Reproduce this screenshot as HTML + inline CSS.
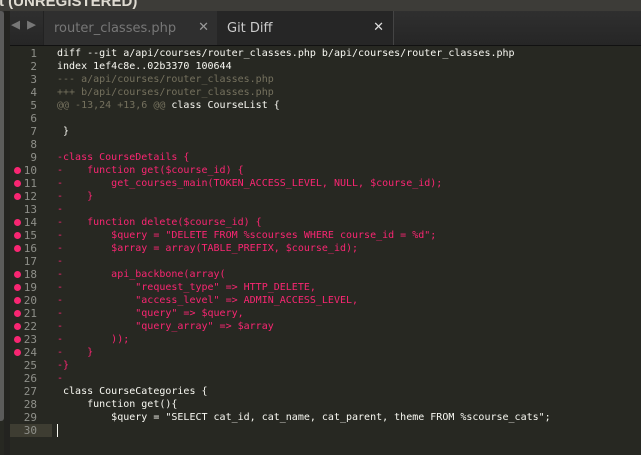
<!DOCTYPE html><html><head><style>
body{margin:0;width:641px;height:455px;overflow:hidden;background:#272822;position:relative;font-family:"DejaVu Sans Mono",monospace}
.t{position:absolute;left:0;top:0;width:641px;height:11px;background:#3d3c38;overflow:hidden}
.t span{position:absolute;left:-1px;top:-7px;font:bold 15px "Liberation Sans",sans-serif;color:#dfdbd2}
.tb{position:absolute;left:0;top:11px;width:641px;height:34px;background:linear-gradient(#2f2f2f,#262626)}
.lb{position:absolute;left:0;top:11px;width:4px;height:410px;background:#5a5a5a;border-radius:0 3px 3px 0}
.side{position:absolute;left:4px;top:11px;width:6px;height:444px;background:#232320}
.tab1{position:absolute;left:43px;top:11px;width:174px;height:34px;background:#2f2f2f;border-left:1px solid #222}
.tab2{position:absolute;left:217px;top:11px;width:176px;height:35px;background:#262626;border-right:1px solid #444}
.tn{position:absolute;left:10px;top:10px;font:13px "DejaVu Sans",sans-serif}
.tab1 .tn{color:#777}.tab2 .tn{color:#ccc}
.x{position:absolute;right:9px;top:9px;font:bold 13px "DejaVu Sans",sans-serif}
.tab1 .x{color:#999}.tab2 .x{color:#ddd}
.ar{position:absolute;top:15px;font-size:15px;color:#777}
.bl{position:absolute;left:0;top:45px;width:641px;height:1px;background:#111}
.code{position:absolute;left:10px;top:47px;font-size:10px;line-height:13px}
.l{height:13px;position:relative}
.g{position:absolute;left:0;width:27px;height:13px;text-align:right;color:#8f908a;font-size:11px;padding-right:15px}
.g i{position:absolute;left:4px;top:3px;width:7px;height:7px;border-radius:50%;background:#f92672}
.c{position:absolute;left:47px;color:#f8f8f2;white-space:pre}
.m{color:#75715e}.r{color:#f92672}
.hl .g{background:#3e3d32}
.cur{display:inline-block;width:1px;height:13px;background:#f8f8f0;vertical-align:top}
</style></head><body>
<div class="t"><span>t (UNREGISTERED)</span></div>
<div class="tb"></div>
<div class="ar" style="left:11px">◀</div><div class="ar" style="left:27px">▶</div>
<div class="tab1"><span class="tn">router_classes.php</span><span class="x">✕</span></div>
<div class="tab2"><span class="tn">Git Diff</span><span class="x">✕</span></div>
<div class="bl"></div>
<div class="side"></div><div class="lb"></div>
<div class="code"><div class="l"><span class="g">1</span><span class="c">diff --git a/api/courses/router_classes.php b/api/courses/router_classes.php</span></div><div class="l"><span class="g">2</span><span class="c">index 1ef4c8e..02b3370 100644</span></div><div class="l"><span class="g">3</span><span class="c m">--- a/api/courses/router_classes.php</span></div><div class="l"><span class="g">4</span><span class="c m">+++ b/api/courses/router_classes.php</span></div><div class="l"><span class="g">5</span><span class="c"><span class="m">@@ -13,24 +13,6 @@</span> class CourseList {</span></div><div class="l"><span class="g">6</span><span class="c"></span></div><div class="l"><span class="g">7</span><span class="c"> }</span></div><div class="l"><span class="g">8</span><span class="c"></span></div><div class="l"><span class="g">9</span><span class="c r">-class CourseDetails {</span></div><div class="l"><span class="g"><i></i>10</span><span class="c r">-    function get($course_id) {</span></div><div class="l"><span class="g"><i></i>11</span><span class="c r">-        get_courses_main(TOKEN_ACCESS_LEVEL, NULL, $course_id);</span></div><div class="l"><span class="g"><i></i>12</span><span class="c r">-    }</span></div><div class="l"><span class="g">13</span><span class="c r">-</span></div><div class="l"><span class="g"><i></i>14</span><span class="c r">-    function delete($course_id) {</span></div><div class="l"><span class="g"><i></i>15</span><span class="c r">-        $query = "DELETE FROM %scourses WHERE course_id = %d";</span></div><div class="l"><span class="g"><i></i>16</span><span class="c r">-        $array = array(TABLE_PREFIX, $course_id);</span></div><div class="l"><span class="g">17</span><span class="c r">-</span></div><div class="l"><span class="g"><i></i>18</span><span class="c r">-        api_backbone(array(</span></div><div class="l"><span class="g"><i></i>19</span><span class="c r">-            "request_type" =&gt; HTTP_DELETE,</span></div><div class="l"><span class="g"><i></i>20</span><span class="c r">-            "access_level" =&gt; ADMIN_ACCESS_LEVEL,</span></div><div class="l"><span class="g"><i></i>21</span><span class="c r">-            "query" =&gt; $query,</span></div><div class="l"><span class="g"><i></i>22</span><span class="c r">-            "query_array" =&gt; $array</span></div><div class="l"><span class="g"><i></i>23</span><span class="c r">-        ));</span></div><div class="l"><span class="g"><i></i>24</span><span class="c r">-    }</span></div><div class="l"><span class="g">25</span><span class="c r">-}</span></div><div class="l"><span class="g">26</span><span class="c r">-</span></div><div class="l"><span class="g">27</span><span class="c"> class CourseCategories {</span></div><div class="l"><span class="g">28</span><span class="c">     function get(){</span></div><div class="l"><span class="g">29</span><span class="c">         $query = "SELECT cat_id, cat_name, cat_parent, theme FROM %scourse_cats";</span></div><div class="l hl"><span class="g">30</span><span class="c"><span class="cur"></span></span></div></div>
</body></html>
